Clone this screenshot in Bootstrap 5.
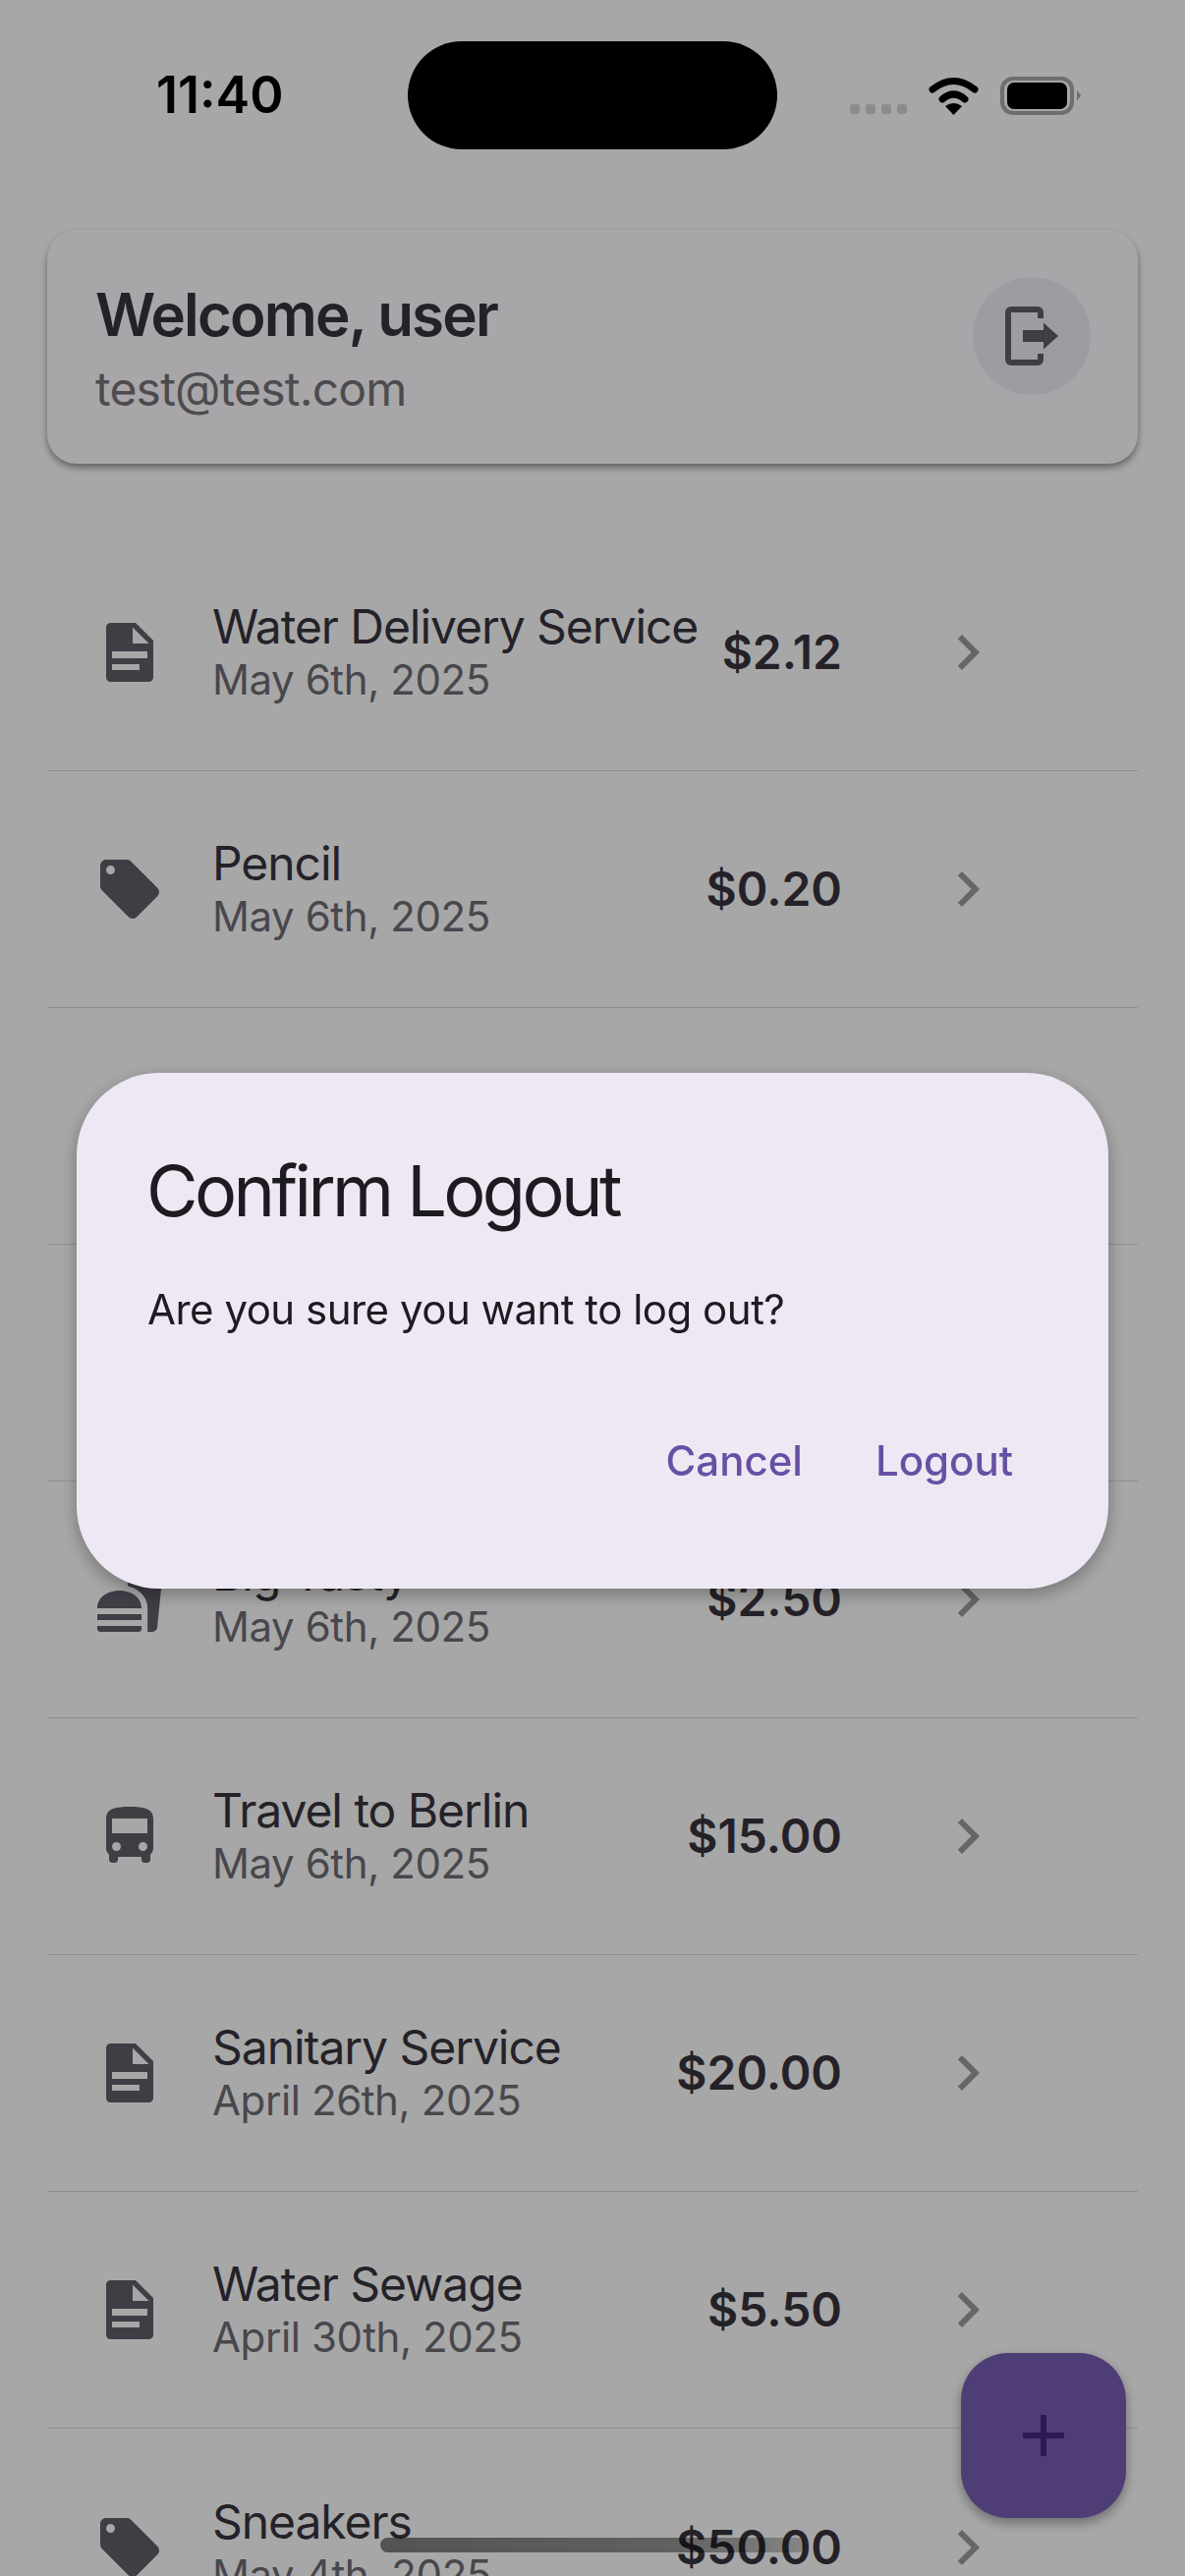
<!DOCTYPE html>
<html lang="en">
<head>
  <meta charset="UTF-8">
  <meta name="viewport" content="width=device-width, initial-scale=1.0">
  <title>Expenses</title>

  <link rel="stylesheet" href="https://cdn.jsdelivr.net/npm/bootstrap@5.3.2/dist/css/bootstrap.min.css"/>
  <style>
    html, body { height: 2622px; overflow: hidden; }
    body { background: #fefeff; font-family: Inter, "Liberation Sans", sans-serif; color: #38343d; }

    .status-strip { height: 234px; padding-top: 42px; position: relative; z-index: 1060; }
    .status-time { width: 256px; margin-left: 159px; height: 110px; font-size: 52px; font-weight: 600; color: #000; }
    .status-island { width: 376px; height: 110px; background: #000; border-radius: 55px; }
    .status-icons { margin: 36px 0 0 74px; }

    .user-card { margin: 0 48px; height: 238px; padding: 0 48px 0 49px; background: #fffcff; border: 0; border-radius: 30px; box-shadow: 0 4px 7px rgba(0,0,0,.4); }
    .user-text { padding-top: 2px; }
    .user-name { font-size: 60px; font-weight: 600; line-height: 76px; letter-spacing: -1.8px; margin-bottom: 8px; }
    .user-mail { font-size: 48px; line-height: 60px; letter-spacing: -.8px; color: #757379; }
    .logout-round { width: 120px; height: 120px; margin-bottom: 22px; background: #f1ebf7; border-radius: 50%; border: 0; padding: 0; }
    .logout-round svg, .row-icon { width: 72px; height: 72px; fill: #615d6a; }

    .expense-list { margin: 72px 48px 0; }
    .expense-row { height: 241px; padding: 0 137px 0 48px; background: none; border-color: #d9d9dc; border-width: 0 0 2px; border-radius: 0 !important; color: inherit; }
    .row-icon { margin-right: 48px; flex: none; }
    .row-text { padding-bottom: 5px; min-width: 0; white-space: nowrap; }
    .row-title { font-size: 48px; line-height: 60px; letter-spacing: -1.05px; }
    .row-date { font-size: 42px; line-height: 47px; letter-spacing: -.4px; color: #6e6c74; }
    .row-price { font-size: 48px; font-weight: 600; letter-spacing: 0; margin-right: 92px; }
    .row-chevron { width: 72px; height: 72px; fill: #9b9b9b; flex: none; }

    .modal-backdrop.show { opacity: .34; height: 2622px; width: 1206px; }
    .modal { height: 2622px; }
    .modal-dialog.logout-dialog { max-width: none; margin: 1092px 78px 0; }
    .logout-box { height: 525px; padding: 72px 72px 0; background: #eee8f4; border: 0; border-radius: 84px; box-shadow: 0 6px 18px rgba(0,0,0,.3); color: #1d1b20; }
    .logout-heading { font-size: 72px; font-weight: 400; line-height: 96px; letter-spacing: -3.6px; margin: 0 0 0 -1px; }
    .logout-text { padding: 0; margin-top: 43px; font-size: 42px; line-height: 60px; letter-spacing: -.5px; flex: none; }
    .logout-actions { padding: 0; border: 0; margin-top: 94px; margin-right: 25px; gap: 74px; justify-content: flex-end; }
    .logout-action { padding: 0; margin: 0 !important; border: 0; font-size: 42px; font-weight: 500; line-height: 60px; color: #6750a4; letter-spacing: 0; }

    .add-fab { position: absolute; left: 978px; top: 2395px; width: 168px; height: 168px; background: #795eb3; border: 0; border-radius: 48px; padding: 0; box-shadow: 0 5px 12px rgba(0,0,0,.35); }
    .add-fab svg { width: 72px; height: 72px; fill: #442981; }
    .home-bar { position: absolute; left: 387px; top: 2583px; width: 432px; height: 15px; border-radius: 8px; background: linear-gradient(90deg, rgba(0,0,0,.5), rgba(0,0,0,.42) 70%, rgba(0,0,0,.2)); z-index: 1060; }
  </style>
</head>
<body>
  <svg width="0" height="0" class="position-absolute">
    <defs>
      <path id="ic-doc" fill-rule="evenodd" d="M5.500 2H14l6 6v12.500a1.500 1.500 0 0 1-1.500 1.500h-13A1.500 1.500 0 0 1 4 20.500v-17A1.500 1.500 0 0 1 5.500 2zM13 3.500V9h5.500zM6 11.700V14h12v-2.300zM6 16v2h9.300v-2z"/>
      <path id="ic-tag" d="M21.410 11.580l-9-9C12.050 2.220 11.550 2 11 2H4c-1.100 0-2 .9-2 2v7c0 .55.22 1.050.59 1.420l9 9c.36.36.86.58 1.410.58.55 0 1.050-.22 1.410-.59l7-7c.37-.36.59-.86.59-1.410 0-.55-.23-1.060-.59-1.420zM5.500 7C4.670 7 4 6.330 4 5.500S4.670 4 5.500 4 7 4.670 7 5.500 6.330 7 5.500 7z"/>
      <path id="ic-food" d="M18.060 22.990h1.660c.84 0 1.530-.64 1.630-1.460L23 5.050h-5V1h-1.970v4.050h-4.970l.3 2.340c1.710.47 3.310 1.320 4.270 2.260 1.440 1.420 2.430 2.890 2.430 5.290v8.050zM1 21.990V21h15.030v.99c0 .55-.45 1-1.010 1H2.010c-.56 0-1.010-.45-1.010-1zm15.030-7c0-8-15.030-8-15.030 0h15.030zM1.020 17h15v2h-15z"/>
      <path id="ic-bus" d="M4 16c0 .88.39 1.670 1 2.220V20c0 .55.45 1 1 1h1c.55 0 1-.45 1-1v-1h8v1c0 .55.45 1 1 1h1c.55 0 1-.45 1-1v-1.780c.61-.55 1-1.340 1-2.220V6c0-3.500-3.580-4-8-4s-8 .5-8 4v10zm3.500 1c-.83 0-1.500-.67-1.500-1.500S6.670 14 7.500 14s1.500.67 1.500 1.500S8.330 17 7.500 17zm9 0c-.83 0-1.500-.67-1.500-1.500s.67-1.500 1.500-1.500 1.500.67 1.500 1.500-.67 1.500-1.500 1.500zm1.500-6H6V6h12v5z"/>
      <path id="ic-chev" d="M10 6L8.590 7.410 13.170 12l-4.580 4.590L10 18l6-6z"/>
    </defs>
  </svg>

  <div class="status-strip d-flex align-items-start">
    <div class="status-time d-flex align-items-center">11:40</div>
    <div class="status-island"></div>
    <svg class="status-icons" width="235" height="39" viewBox="0 0 235 39">
      <g fill="#8c8c8e"><rect x="0" y="28" width="10" height="10" rx="3"/><rect x="16" y="28" width="10" height="10" rx="3"/><rect x="32" y="28" width="10" height="10" rx="3"/><rect x="48" y="28" width="10" height="10" rx="3"/></g>
      <g fill="none" stroke="#000" stroke-width="7" stroke-linecap="round"><path d="M84 13Q105.500 -4 127 13"/><path d="M94 23Q105.500 13 117 23"/></g>
      <path d="M97 30Q105.500 24 114 30L105.500 39z"/>
      <rect x="155" y="2" width="71" height="35" rx="11" fill="none" stroke="#6e6e70" stroke-width="4"/>
      <rect x="160" y="6" width="61" height="27" rx="7"/>
      <path d="M231 14l4 5-4 6z" fill="#6e6e70"/>
    </svg>
  </div>

  <div class="card user-card flex-row align-items-center justify-content-between">
    <div class="user-text">
      <div class="user-name">Welcome, user</div>
      <div class="user-mail">test@test.com</div>
    </div>
    <button class="logout-round d-flex align-items-center justify-content-center" type="button" aria-label="Log out">
      <svg viewBox="0 0 24 24"><path d="M5 2h9a2 2 0 0 1 2 2v2h-2V4H5v16h9v-2h2v2a2 2 0 0 1-2 2H5a2 2 0 0 1-2-2V4a2 2 0 0 1 2-2z"/><path d="M9 10h7V7.500l5 4.500-5 4.500V14H9z"/></svg>
    </button>
  </div>

  <div class="list-group list-group-flush expense-list">
    <div class="list-group-item expense-row d-flex align-items-center">
      <svg class="row-icon" viewBox="0 0 24 24"><use href="#ic-doc"/></svg>
      <div class="row-text flex-grow-1"><div class="row-title">Water Delivery Service</div><div class="row-date">May 6th, 2025</div></div>
      <div class="row-price">$2.12</div>
      <svg class="row-chevron" viewBox="0 0 24 24"><use href="#ic-chev"/></svg>
    </div>
    <div class="list-group-item expense-row d-flex align-items-center">
      <svg class="row-icon" viewBox="0 0 24 24"><use href="#ic-tag"/></svg>
      <div class="row-text flex-grow-1"><div class="row-title">Pencil</div><div class="row-date">May 6th, 2025</div></div>
      <div class="row-price">$0.20</div>
      <svg class="row-chevron" viewBox="0 0 24 24"><use href="#ic-chev"/></svg>
    </div>
    <div class="list-group-item expense-row"></div>
    <div class="list-group-item expense-row"></div>
    <div class="list-group-item expense-row d-flex align-items-center">
      <svg class="row-icon" viewBox="0 0 24 24"><use href="#ic-food"/></svg>
      <div class="row-text flex-grow-1"><div class="row-title">Big Tasty</div><div class="row-date">May 6th, 2025</div></div>
      <div class="row-price">$2.50</div>
      <svg class="row-chevron" viewBox="0 0 24 24"><use href="#ic-chev"/></svg>
    </div>
    <div class="list-group-item expense-row d-flex align-items-center">
      <svg class="row-icon" viewBox="0 0 24 24"><use href="#ic-bus"/></svg>
      <div class="row-text flex-grow-1"><div class="row-title">Travel to Berlin</div><div class="row-date">May 6th, 2025</div></div>
      <div class="row-price">$15.00</div>
      <svg class="row-chevron" viewBox="0 0 24 24"><use href="#ic-chev"/></svg>
    </div>
    <div class="list-group-item expense-row d-flex align-items-center">
      <svg class="row-icon" viewBox="0 0 24 24"><use href="#ic-doc"/></svg>
      <div class="row-text flex-grow-1"><div class="row-title">Sanitary Service</div><div class="row-date">April 26th, 2025</div></div>
      <div class="row-price">$20.00</div>
      <svg class="row-chevron" viewBox="0 0 24 24"><use href="#ic-chev"/></svg>
    </div>
    <div class="list-group-item expense-row d-flex align-items-center">
      <svg class="row-icon" viewBox="0 0 24 24"><use href="#ic-doc"/></svg>
      <div class="row-text flex-grow-1"><div class="row-title">Water Sewage</div><div class="row-date">April 30th, 2025</div></div>
      <div class="row-price">$5.50</div>
      <svg class="row-chevron" viewBox="0 0 24 24"><use href="#ic-chev"/></svg>
    </div>
    <div class="list-group-item expense-row d-flex align-items-center">
      <svg class="row-icon" viewBox="0 0 24 24"><use href="#ic-tag"/></svg>
      <div class="row-text flex-grow-1"><div class="row-title">Sneakers</div><div class="row-date">May 4th, 2025</div></div>
      <div class="row-price">$50.00</div>
      <svg class="row-chevron" viewBox="0 0 24 24"><use href="#ic-chev"/></svg>
    </div>
  </div>

  <button class="add-fab d-flex align-items-center justify-content-center" type="button" aria-label="Add">
    <svg viewBox="0 0 24 24"><path d="M19 13h-6v6h-2v-6H5v-2h6V5h2v6h6v2z"/></svg>
  </button>

  <div class="modal-backdrop show"></div>
  <div class="modal d-block">
    <div class="modal-dialog logout-dialog">
      <div class="modal-content logout-box">
        <h5 class="modal-title logout-heading">Confirm Logout</h5>
        <div class="modal-body logout-text">Are you sure you want to log out?</div>
        <div class="modal-footer logout-actions">
          <button class="btn logout-action" type="button">Cancel</button>
          <button class="btn logout-action" type="button">Logout</button>
        </div>
      </div>
    </div>
  </div>

  <div class="home-bar"></div>
</body>
</html>
